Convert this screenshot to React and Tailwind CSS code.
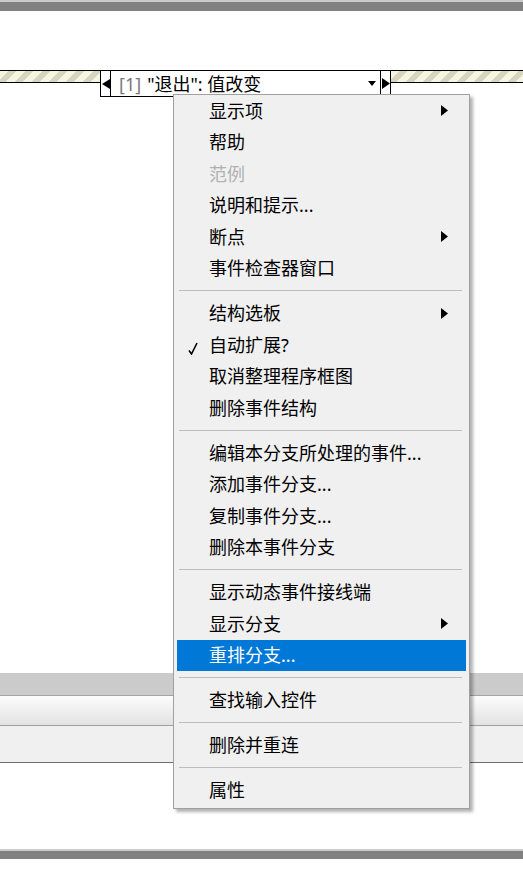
import React from 'react';

const items = [
  [{ label: '显示项', sub: true }, { label: '帮助' }, { label: '范例', disabled: true }, { label: '说明和提示...' }, { label: '断点', sub: true }, { label: '事件检查器窗口' }],
  [{ label: '结构选板', sub: true }, { label: '自动扩展?', checked: true }, { label: '取消整理程序框图' }, { label: '删除事件结构' }],
  [{ label: '编辑本分支所处理的事件...' }, { label: '添加事件分支...' }, { label: '复制事件分支...' }, { label: '删除本事件分支' }],
  [{ label: '显示动态事件接线端' }, { label: '显示分支', sub: true }, { label: '重排分支...', active: true }],
  [{ label: '查找输入控件' }],
  [{ label: '删除并重连' }],
  [{ label: '属性' }],
];

function Hatch({ className }) {
  return (
    <div
      className={`h-[13px] border-y border-black bg-[repeating-linear-gradient(135deg,#f6f5e1_0px,#f6f5e1_6px,#d7d5c1_6px,#d7d5c1_12px)] ${className}`}
    />
  );
}

function MenuItem({ item }) {
  const color = item.active ? 'bg-[#0078d7] text-white' : item.disabled ? 'text-[#b0b0b0]' : 'text-black';
  return (
    <div className={`h-[31.5px] flex items-center ${color}`}>
      <span className="w-[32px] pl-[11px] flex items-center">
        {item.checked && (
          <svg width="10" height="13" viewBox="0 0 10 13" className="mt-[7px]">
            <path d="M1 8.5 L3.5 12 L9 1" fill="none" stroke="#000" strokeWidth="1.6" />
          </svg>
        )}
      </span>
      <span className="flex-1 leading-none">{item.label}</span>
      {item.sub && (
        <svg width="7" height="11" viewBox="0 0 7 11" className="mr-[18px]">
          <polygon points="0,0 7,5.5 0,11" fill="#000" />
        </svg>
      )}
    </div>
  );
}

export default function App() {
  return (
    <div className="relative w-[523px] h-[873px] overflow-hidden bg-white font-['Noto_Sans','Noto_Sans_CJK_SC',sans-serif]">
      <div className="h-[2px] bg-[#cacaca]" />
      <div className="h-[9px] bg-[#808080]" />
      <div className="h-[59px]" />

      {/* event structure selector */}
      <div className="h-[27px] flex items-start">
        <Hatch className="w-[100px]" />
        <div className="w-[291px] h-[27px] border border-black bg-white flex">
          <div className="w-[10px] border-r border-black flex items-center justify-center">
            <svg width="8" height="10" viewBox="0 0 8 10">
              <polygon points="8,0 0,5 8,10" fill="#000" />
            </svg>
          </div>
          <div className="flex-1 flex items-center pl-[8px] pr-[4px] text-[18px] leading-none">
            <span className="text-[#7a7a7a]">[1]</span>
            <span className="ml-[6px] text-black">"退出": 值改变</span>
            <svg width="8" height="5" viewBox="0 0 8 5" className="ml-auto">
              <polygon points="0,0 8,0 4,5" fill="#000" />
            </svg>
          </div>
          <div className="w-[10px] border-l border-black flex items-center justify-center">
            <svg width="8" height="11" viewBox="0 0 8 11">
              <polygon points="0,0 8,5.5 0,11" fill="#000" />
            </svg>
          </div>
        </div>
        <Hatch className="flex-1" />
      </div>

      <div className="h-[576px]" />
      <div className="h-[22px] bg-[#cbcbcb]" />
      <div className="h-px bg-[#a3a3a3]" />
      <div className="h-[29px] bg-linear-to-b from-[#fcfcfc] to-[#e2e2e2]" />
      <div className="h-px bg-[#a0a0a0]" />
      <div className="h-[36px] bg-[#f0f0f0]" />
      <div className="h-px bg-[#6e6e6e]" />
      <div className="h-[86px]" />
      <div className="h-[2px] bg-[#cacaca]" />
      <div className="h-[8px] bg-[#808080]" />

      {/* context menu */}
      <div className="absolute left-[173px] top-[94px] w-[297px] border border-[#a0a0a0] bg-[#f0f0f0] px-[3px] pb-[2px] text-[18px] shadow-[3px_3px_3px_rgba(0,0,0,0.3)]">
        {items.map((group, gi) => (
          <div key={gi}>
            {gi > 0 && (
              <div className="h-[13.5px] flex items-center ml-[2px] mr-[4px]">
                <div className="w-full h-px bg-[#bdbdbd]" />
              </div>
            )}
            {group.map(item => (
              <MenuItem key={item.label} item={item} />
            ))}
          </div>
        ))}
      </div>
    </div>
  );
}
